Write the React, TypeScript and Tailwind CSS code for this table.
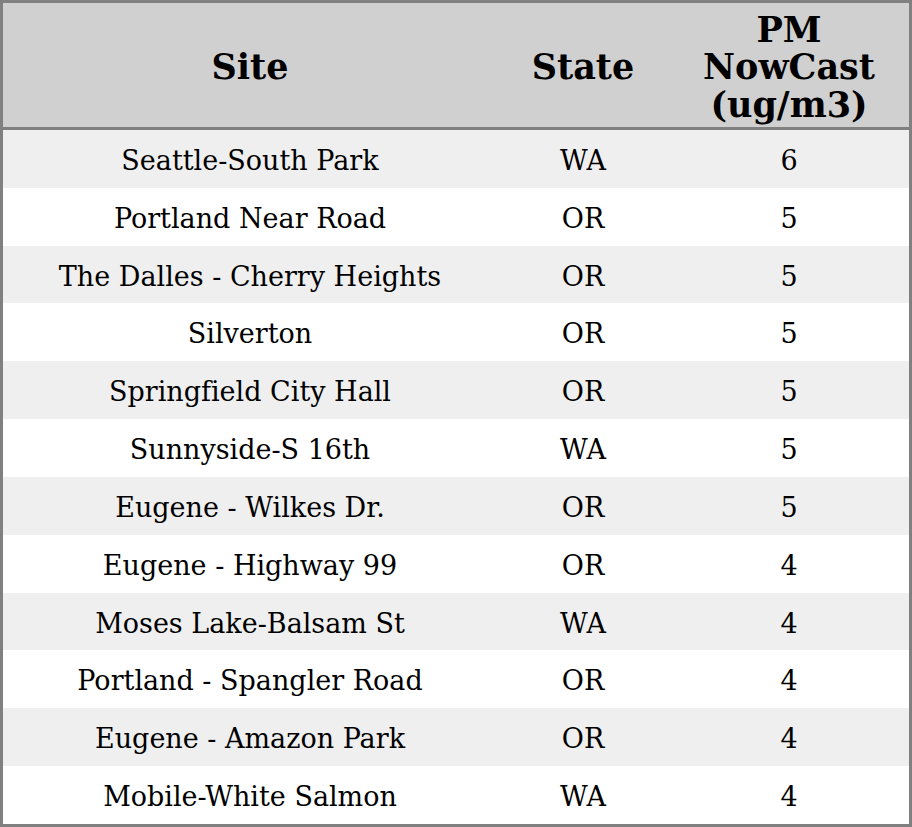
const rows: [string, string, number][] = [
  ["Seattle-South Park", "WA", 6],
  ["Portland Near Road", "OR", 5],
  ["The Dalles - Cherry Heights", "OR", 5],
  ["Silverton", "OR", 5],
  ["Springfield City Hall", "OR", 5],
  ["Sunnyside-S 16th", "WA", 5],
  ["Eugene - Wilkes Dr.", "OR", 5],
  ["Eugene - Highway 99", "OR", 4],
  ["Moses Lake-Balsam St", "WA", 4],
  ["Portland - Spangler Road", "OR", 4],
  ["Eugene - Amazon Park", "OR", 4],
  ["Mobile-White Salmon", "WA", 4],
];

export default function App() {
  return (
    <div className="w-[912px] h-[827px] border-[3px] border-[#808080] bg-white text-black flex flex-col font-['DejaVu_Serif',serif] [font-variant-ligatures:none] [font-feature-settings:'liga'_0,'clig'_0]">
      {/* header */}
      <div className="flex h-[127px] shrink-0 pt-[4px] bg-[#d0d0d0] border-b-[3px] border-[#808080] text-[35px] font-bold leading-[37.5px]">
        <div className="w-[494px] flex items-center justify-center">Site</div>
        <div className="w-[172px] flex items-center justify-center">State</div>
        <div className="flex-1 flex items-center justify-center text-center">
          PM<br />NowCast<br />(ug/m3)
        </div>
      </div>

      {rows.map(([site, st, v], i) => (
        <div
          key={site}
          className={`flex flex-1 items-center pt-[4px] text-[27px] leading-[32px] ${i % 2 === 0 ? "bg-[#efefef]" : "bg-white"}`}
        >
          <div className="w-[494px] text-center">{site}</div>
          <div className="w-[172px] text-center">{st}</div>
          <div className="flex-1 text-center">{v}</div>
        </div>
      ))}
    </div>
  );
}
